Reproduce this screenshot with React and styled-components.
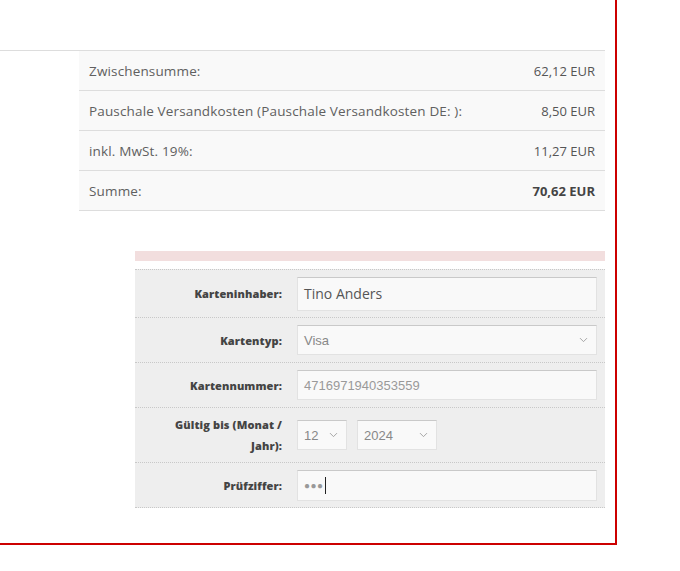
import React from 'react';
import styled, { createGlobalStyle } from 'styled-components';
import { ChevronDown } from 'lucide-react';

const Global = createGlobalStyle`
  html, body { margin: 0; padding: 0; background: #fff; }
  body { font-family: "Open Sans", "Noto Sans", sans-serif; color: #555; }
`;

const Frame = styled.div`
  box-sizing: border-box;
  width: 617px;
  height: 545px;
  border-right: 2px solid #cc0000;
  border-bottom: 2px solid #cc0000;
  padding: 50px 10px 0 0;
`;

const Summary = styled.div`
  border-top: 1px solid #ddd;
  padding-left: 79px;
`;

const SumRow = styled.div`
  display: flex;
  justify-content: space-between;
  align-items: center;
  height: 39px;
  border-bottom: 1px solid #ddd;
  background: #f9f9f9;
  padding: 0 10px;
  color: #606060;
`;

const SumLabel = styled.span`
  font-size: 13.5px;
  font-weight: 400;
  letter-spacing: 0.15px;
`;

const SumValue = styled.span`
  font-size: 13px;
  font-weight: ${(p) => (p.$bold ? 700 : 400)};
  color: ${(p) => (p.$bold ? '#444' : '#555')};
`;

const Payment = styled.div`
  margin: 40px 0 0 135px;
`;

const AlertBar = styled.div`
  height: 10px;
  background: #f2dede;
  margin-bottom: 8px;
`;

const FormTable = styled.div`
  background: #eee;
  border-bottom: 1px dotted #c8c8c8;
`;

const FormRow = styled.div`
  display: grid;
  grid-template-columns: 162px 1fr;
  align-items: center;
  height: ${(p) => p.$h}px;
  border-top: 1px dotted #c8c8c8;
`;

const Label = styled.div`
  text-align: right;
  padding-right: 15px;
  font-size: 11px;
  font-weight: 800;
  line-height: 21px;
  letter-spacing: 0.1px;
  color: #444;
`;

const Field = styled.div`
  display: flex;
  gap: 10px;
  padding-right: 8px;
`;

const Box = styled.div`
  position: relative;
  box-sizing: border-box;
  display: flex;
  align-items: center;
  width: ${(p) => p.$w || '100%'};
  height: ${(p) => p.$h || 30}px;
  padding: 0 6px;
  background: #f9f9f9;
  border: 1px solid #e2e2e2;
  border-top-color: #c9c9c9;
  font-family: ${(p) => (p.$sys ? '"Liberation Sans", Arial, sans-serif' : '"Open Sans", sans-serif')};
  font-size: ${(p) => p.$fs || 13}px;
  color: ${(p) => p.$color || '#555'};
`;

const Chevron = styled(ChevronDown)`
  position: absolute;
  right: 6px;
  top: 50%;
  transform: translateY(-50%);
  color: #999;
`;

const Dots = styled.span`
  font-size: 10px;
  letter-spacing: 0.5px;
  color: #999;
`;

const Caret = styled.span`
  display: inline-block;
  width: 1px;
  height: 17px;
  background: #222;
  margin-left: 1px;
`;

export default function App() {
  return (
    <>
      <Global />
      <Frame>
        <Summary>
          <SumRow>
            <SumLabel>Zwischensumme:</SumLabel>
            <SumValue>62,12 EUR</SumValue>
          </SumRow>
          <SumRow>
            <SumLabel>Pauschale Versandkosten (Pauschale Versandkosten DE: ):</SumLabel>
            <SumValue>8,50 EUR</SumValue>
          </SumRow>
          <SumRow>
            <SumLabel>inkl. MwSt. 19%:</SumLabel>
            <SumValue>11,27 EUR</SumValue>
          </SumRow>
          <SumRow>
            <SumLabel>Summe:</SumLabel>
            <SumValue $bold>70,62 EUR</SumValue>
          </SumRow>
        </Summary>

        <Payment>
          <AlertBar />
          <FormTable>
            <FormRow $h={47}>
              <Label>Karteninhaber:</Label>
              <Field>
                <Box $h={34} $fs={14}>Tino Anders</Box>
              </Field>
            </FormRow>
            <FormRow $h={44}>
              <Label>Kartentyp:</Label>
              <Field>
                <Box $h={30} $sys $color="#888" $fs={13}>
                  Visa
                  <Chevron size={13} strokeWidth={1.6} />
                </Box>
              </Field>
            </FormRow>
            <FormRow $h={44}>
              <Label>Kartennummer:</Label>
              <Field>
                <Box $h={30} $sys $color="#999" $fs={13}>4716971940353559</Box>
              </Field>
            </FormRow>
            <FormRow $h={54}>
              <Label>
                Gültig bis (Monat /
                <br />
                Jahr):
              </Label>
              <Field>
                <Box $h={30} $w="50px" $sys $color="#888" $fs={13}>
                  12
                  <Chevron size={13} strokeWidth={1.6} />
                </Box>
                <Box $h={30} $w="80px" $sys $color="#888" $fs={13}>
                  2024
                  <Chevron size={13} strokeWidth={1.6} />
                </Box>
              </Field>
            </FormRow>
            <FormRow $h={44}>
              <Label>Prüfziffer:</Label>
              <Field>
                <Box $h={31}>
                  <Dots>●●●</Dots>
                  <Caret />
                </Box>
              </Field>
            </FormRow>
          </FormTable>
        </Payment>
      </Frame>
    </>
  );
}
